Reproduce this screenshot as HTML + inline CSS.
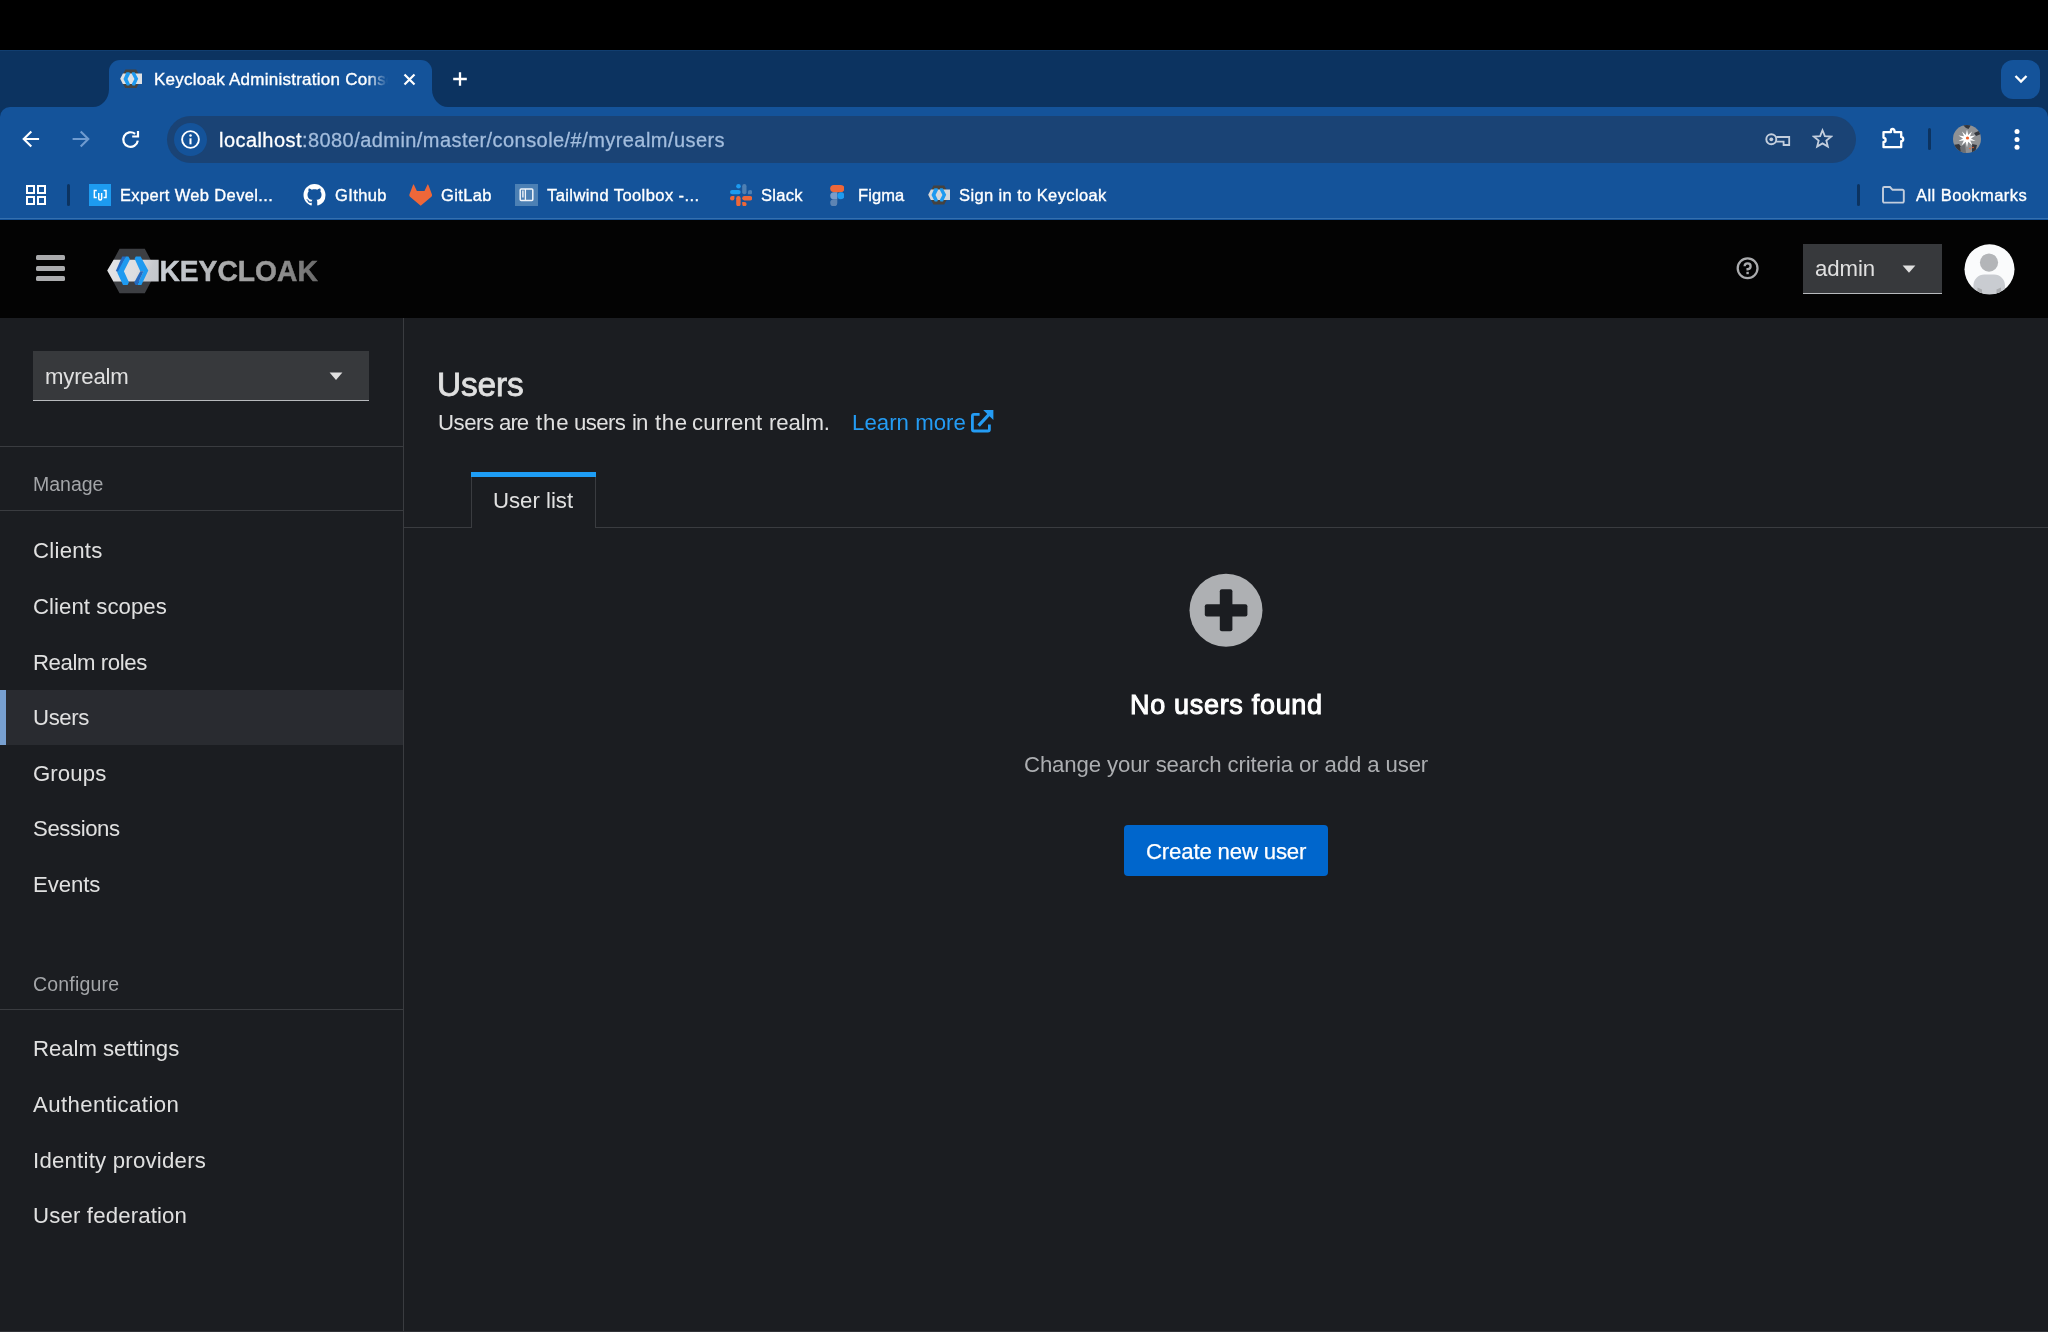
<!DOCTYPE html>
<html lang="en">
<head>
<meta charset="utf-8">
<title>Keycloak Administration Console</title>
<style>
*{box-sizing:border-box;margin:0;padding:0}
html,body{width:2048px;height:1332px;overflow:hidden;background:#1b1d21}
body{font-family:"Liberation Sans",sans-serif;color:#e0e0e0;position:relative}
.abs{position:absolute}
.t{position:absolute;white-space:pre;line-height:1;will-change:transform}
/* ---------- browser chrome ---------- */
#osbar{left:0;top:0;width:2048px;height:50px;background:#000}
#tabstrip{left:0;top:49.6px;width:2048px;height:80px;background:#0c3360;border-top:1px solid #113e70}
#toolbar{left:0;top:107px;width:2048px;height:112.5px;background:#14539a;border-radius:10px 10px 0 0}
#chromeline{left:0;top:218.4px;width:2048px;height:1.1px;background:#346fae}
#tab{left:108.7px;top:60px;width:323.5px;height:47px;background:#14539a;border-radius:11px 11px 0 0}
.tabcurve{width:16px;height:18px;top:89px;background:#14539a}
.tabcurve i{display:block;width:16px;height:18px;background:#0c3360}
#tcl{left:92.7px}#tcl i{border-radius:0 0 16px 0/0 0 18px 0}
#tcr{left:432.2px}#tcr i{border-radius:0 0 0 16px/0 0 0 18px}
#omni{left:167px;top:116px;width:1689px;height:47px;border-radius:24px;background:#1a4375}
#omniinfo{left:174.4px;top:122.5px;width:33px;height:33px;border-radius:50%;background:#14539a}
#tabsearch{left:2001px;top:60px;width:39px;height:39px;border-radius:12px;background:#14539a}
.chrometxt{color:#fff;font-size:16.5px;-webkit-text-stroke:.35px #fff}
/* ---------- keycloak ---------- */
#kchead{left:0;top:220px;width:2048px;height:98px;background:#030303}
#side{left:0;top:318px;width:403px;height:1014px;background:#1b1d21}
#sideborder{left:403px;top:318px;width:1px;height:1014px;background:#3a3c40}
.hr{height:1px;background:#3a3c40;left:0;width:403px}
.nav{left:33.1px;font-size:22.2px;color:#e0e0e0}
.navsec{left:33.3px;font-size:19.5px;color:#a3a5a8}
#navsel{left:0;top:690px;width:403px;height:55.4px;background:#292b30}
#navselbar{left:0;top:690px;width:5.5px;height:55.4px;background:#78a0d0}
#realm{left:33.4px;top:351px;width:335.6px;height:50px;background:#37393c;border-bottom:1px solid #b8babd}
#userdd{left:1803px;top:244px;width:139px;height:50px;background:#37393c;border-bottom:1px solid #b8babd}
#tabline{left:404px;top:527px;width:1644px;height:1px;background:#3a3c40}
#utab{left:471px;top:472px;width:125px;height:56px;background:#1b1d21;border-left:1px solid #3a3c40;border-right:1px solid #3a3c40}
#utabbar{left:471px;top:472px;width:125px;height:4.9px;background:#1e9df5}
#btn{left:1123.7px;top:825.4px;width:204.8px;height:50.4px;border-radius:4px;background:#0066cc}
</style>
</head>
<body>
<!-- browser chrome -->
<section id="browser-chrome">
<div class="abs" id="osbar"></div>
<div class="abs" id="tabstrip"></div>
<div class="abs" id="toolbar"></div>
<div class="abs" id="chromeline"></div>
<div class="abs" id="tab"></div>
<div class="abs tabcurve" id="tcl"><i></i></div>
<div class="abs tabcurve" id="tcr"><i></i></div>
<div class="abs" id="tabsearch"></div>
<div class="abs" id="omni"></div>
<div class="abs" id="omniinfo"></div>
<!-- tab -->
<svg class="abs" style="left:120px;top:68.7px" width="22.4" height="19.8" viewBox="106.8 248.4 52.4 45.2"><polygon points="119.5,248.8 144.8,248.8 156.6,271 144.8,293.2 119.5,293.2 107.7,271" fill="#45423f"/><polygon points="113.6,258.6 158.7,258.6 158.7,282.8 113.4,282.8 107.2,270.6" fill="#dfe1e4"/><polygon points="121.8,255.6 128.8,255.6 130.6,258.8 124.4,271 130,283 128.4,286.4 122.6,286.4 115,271" fill="#1e9af0"/><polygon points="135.2,255.6 141.2,255.6 149.4,270.6 142,286.4 136,286.4 134.4,283.2 140.6,271 134,258.6" fill="#1e9af0"/></svg>
<div class="t" id="tabtitle" style="left:154px;top:70.5px;font-size:17px;letter-spacing:.25px;color:#fff;-webkit-text-stroke:.35px #fff;width:234px;overflow:hidden;-webkit-mask-image:linear-gradient(90deg,#000 91%,transparent 100%);mask-image:linear-gradient(90deg,#000 91%,transparent 100%)">Keycloak Administration Console</div>
<svg class="abs" style="left:402px;top:72px" width="15" height="15" viewBox="0 0 15 15"><path d="M2.5 2.5 L12.5 12.5 M12.5 2.5 L2.5 12.5" stroke="#fff" stroke-width="2.2" fill="none"/></svg>
<svg class="abs" style="left:451px;top:70px" width="18" height="18" viewBox="0 0 18 18"><path d="M9 2.2 V15.8 M2.2 9 H15.8" stroke="#fff" stroke-width="2.3" fill="none"/></svg>
<svg class="abs" style="left:2012.5px;top:73px" width="16" height="12" viewBox="0 0 16 12"><path d="M2.5 3 L8 8.5 L13.5 3" stroke="#fff" stroke-width="2.4" fill="none"/></svg>
<!-- nav buttons -->
<svg class="abs" style="left:20px;top:128.4px" width="22" height="22" viewBox="0 0 22 22"><path d="M19.1 11 H3.8 M11.3 3.4 L3.7 11 L11.3 18.6" stroke="#fff" stroke-width="2.1" fill="none"/></svg>
<svg class="abs" style="left:70px;top:128.4px" width="22" height="22" viewBox="0 0 22 22"><path d="M2.6 11 H18.2 M10.7 3.4 L18.3 11 L10.7 18.6" stroke="#6f9bd0" stroke-width="2.1" fill="none"/></svg>
<svg class="abs" style="left:120px;top:128px" width="22" height="22" viewBox="0 0 22 22"><path d="M17.8 12.6 A7.3 7.3 0 1 1 15.1 5.85" stroke="#fff" stroke-width="2.2" fill="none"/><path d="M12.2 8.5 H18 V3.1" stroke="#fff" stroke-width="2.2" fill="none"/></svg>
<!-- info icon -->
<svg class="abs" style="left:180.4px;top:128.5px" width="21" height="21" viewBox="0 0 21 21"><circle cx="10.5" cy="10.5" r="8.4" stroke="#fff" stroke-width="1.9" fill="none"/><rect x="9.5" y="9.3" width="2" height="6" fill="#fff"/><circle cx="10.5" cy="6.5" r="1.25" fill="#fff"/></svg>
<div class="t" style="left:219px;top:129.5px;font-size:20px;letter-spacing:.44px;color:#a3bddd;-webkit-text-stroke:.3px"><span style="color:#fff">localhost</span>:8080/admin/master/console/#/myrealm/users</div>
<!-- key -->
<svg class="abs" style="left:1764px;top:130px" width="28" height="18" viewBox="0 0 28 18"><circle cx="7.3" cy="9.3" r="5" stroke="#c3cedd" stroke-width="1.9" fill="none"/><circle cx="7.3" cy="9.3" r="1.9" fill="#c3cedd"/><path d="M12.2 7 H25.2 V15 H19.6 V11.7 H12.2" stroke="#c3cedd" stroke-width="1.8" fill="none"/></svg>
<!-- star -->
<svg class="abs" style="left:1811.5px;top:128px" width="21" height="21" viewBox="0 0 24 24"><path d="M12 2.6 L14.7 9.2 L21.8 9.8 L16.4 14.4 L18.1 21.3 L12 17.6 L5.9 21.3 L7.6 14.4 L2.2 9.8 L9.3 9.2 Z" stroke="#c3cedd" stroke-width="2.1" fill="none" stroke-linejoin="miter"/></svg>
<!-- extensions -->
<svg class="abs" style="left:1880px;top:125px" width="27" height="26" viewBox="0 0 27 26"><path d="M3.5 7.2 H10.9 V5.8 A1.8 1.8 0 0 1 14.5 5.8 V7.2 H21.2 V12.2 A2 2 0 0 1 21.2 16.2 V22.2 H3.5 V17 A2.1 2.1 0 0 0 3.5 12.8 Z" stroke="#fff" stroke-width="2.3" fill="none" stroke-linejoin="round"/></svg>
<div class="abs" style="left:1928px;top:128px;width:3px;height:22px;border-radius:2px;background:#0c3360"></div>
<!-- profile -->
<svg class="abs" style="left:1953px;top:125px" width="28" height="28" viewBox="0 0 28 28"><defs><clipPath id="pc"><circle cx="14" cy="14" r="14"/></clipPath></defs><g clip-path="url(#pc)"><rect width="28" height="28" fill="#8f9194"/><path d="M10 0 L18 0 L15.5 4 L13 3 Z M0 20 L6 19 L9 23 L8 28 L0 28 Z M21 8 L28 5 L28 9 L23 11 Z M19 19 L24 20 L22 28 L19 28 Z" fill="#33363d"/><path d="M7 22 L12 19 L13 28 L8 28 Z" fill="#6d6f73"/><path d="M14 4.5 L15.2 10 L19 6.5 L17 11.2 L22.5 10.5 L18 13.4 L22.5 16 L17.2 15.6 L19.5 20.5 L15.2 16.8 L14 22.5 L12.8 16.8 L8.5 20.5 L10.8 15.6 L5.5 16 L10 13.4 L5.5 10.5 L11 11.2 L9 6.5 L12.8 10 Z" fill="#fff"/><circle cx="14.5" cy="13" r="1.6" fill="#f0602a"/><circle cx="17" cy="23.5" r=".8" fill="#f0602a"/><circle cx="20" cy="22.5" r=".8" fill="#f0602a"/></g></svg>
<svg class="abs" style="left:2012px;top:127px" width="10" height="24" viewBox="0 0 10 24"><circle cx="5" cy="4.6" r="2.5" fill="#fff"/><circle cx="5" cy="12.4" r="2.5" fill="#fff"/><circle cx="5" cy="20.2" r="2.5" fill="#fff"/></svg>
<!-- bookmarks bar -->
<svg class="abs" style="left:25px;top:184px" width="22" height="22" viewBox="0 0 22 22"><g stroke="#fff" stroke-width="2" fill="none"><rect x="2" y="2" width="7" height="7"/><rect x="13" y="2" width="7" height="7"/><rect x="2" y="13" width="7" height="7"/><rect x="13" y="13" width="7" height="7"/></g></svg>
<div class="abs" style="left:67px;top:184px;width:3px;height:22px;border-radius:2px;background:#0c3360"></div>
<svg class="abs" style="left:89px;top:184px" width="22.4" height="22" viewBox="0 0 23 22" preserveAspectRatio="none"><rect width="23" height="22" fill="#1d9bf0"/><g stroke="#fff" stroke-width="1.5" fill="none"><path d="M8 6.5 H5.5 V13.5 H8"/><path d="M15 6.5 H17.5 V13.5 H15"/><path d="M10 9 V14.5 A1.5 1.5 0 0 0 13 14.5 V9"/></g></svg>
<div class="t chrometxt" style="left:120px;top:186.5px;letter-spacing:.35px">Expert Web Devel...</div>
<svg class="abs" style="left:303px;top:184px" width="23" height="22" viewBox="0 0 16 16"><path fill="#fff" d="M8 0C3.58 0 0 3.58 0 8c0 3.54 2.29 6.53 5.47 7.59.4.07.55-.17.55-.38 0-.19-.01-.82-.01-1.49-2.01.37-2.53-.49-2.69-.94-.09-.23-.48-.94-.82-1.13-.28-.15-.68-.52-.01-.53.63-.01 1.08.58 1.23.82.72 1.21 1.87.87 2.33.66.07-.52.28-.87.51-1.07-1.78-.2-3.64-.89-3.64-3.95 0-.87.31-1.59.82-2.15-.08-.2-.36-1.02.08-2.12 0 0 .67-.21 2.2.82.64-.18 1.32-.27 2-.27s1.36.09 2 .27c1.53-1.04 2.2-.82 2.2-.82.44 1.1.16 1.92.08 2.12.51.56.82 1.27.82 2.15 0 3.07-1.87 3.75-3.65 3.95.29.25.54.73.54 1.48 0 1.07-.01 1.93-.01 2.2 0 .21.15.46.55.38A8.01 8.01 0 0 0 16 8c0-4.42-3.58-8-8-8z"/></svg>
<div class="t chrometxt" style="left:335px;top:186.5px;letter-spacing:.4px">GIthub</div>
<svg class="abs" style="left:409px;top:184px" width="23.4" height="22" viewBox="0 0 23.4 22"><path d="M4.7 0.2 L7.9 6.9 H15.5 L18.7 0.2 Q19.3 0.6 19.6 1.6 L23 10.6 Q23.3 11.8 22.4 12.8 L11.7 21.7 L1 12.8 Q0.1 11.8 0.4 10.6 L3.8 1.6 Q4.1 0.6 4.7 0.2 Z" fill="#ee6739"/></svg>
<div class="t chrometxt" style="left:441px;top:186.5px;letter-spacing:.38px">GitLab</div>
<svg class="abs" style="left:515px;top:184px" width="23" height="22" viewBox="0 0 23 22"><rect width="23" height="22" fill="#4c80b4"/><rect x="5.2" y="5" width="12.6" height="11.4" rx="1" fill="none" stroke="#f0f4f9" stroke-width="1.5"/><path d="M10.4 5 V16.4" stroke="#f0f4f9" stroke-width="1.3"/><path d="M7.9 6.6 V13.6" stroke="#f0f4f9" stroke-width="1.4"/></svg>
<div class="t chrometxt" style="left:547px;top:186.5px;letter-spacing:.42px">Tailwind Toolbox -...</div>
<svg class="abs" style="left:729.8px;top:183.9px" width="22.3" height="22.3" viewBox="0 0 22.3 22.3"><circle cx="8.5" cy="2.3" r="2.3" fill="#1d9bf0"/><rect x="0" y="5.9" width="10.7" height="4.4" rx="2.2" fill="#1d9bf0"/><rect x="12.2" y="0" width="4.3" height="10.3" rx="2.15" fill="#4f7fb2"/><path d="M17.9 10.3 V8.1 A2.2 2.2 0 0 1 22.3 8.1 A2.2 2.2 0 0 1 20.1 10.3 Z" fill="#4f7fb2"/><path d="M4.4 12.1 V14.3 A2.2 2.2 0 1 1 2.2 12.1 Z" fill="#ee6739"/><rect x="6.2" y="12.1" width="4.4" height="10.2" rx="2.2" fill="#ee6739"/><rect x="12.2" y="12.1" width="10.1" height="4.3" rx="2.15" fill="#ee6739"/><path d="M12.2 17.9 H14.4 A2.2 2.2 0 1 1 12.2 20.1 Z" fill="#ee6739"/></svg>
<div class="t chrometxt" style="left:761px;top:186.5px;letter-spacing:.29px">Slack</div>
<svg class="abs" style="left:829.8px;top:184.8px" width="14.6" height="21.4" viewBox="0 0 14.6 21.4"><rect x="0.2" y="0" width="14.2" height="7.2" rx="3.6" fill="#ee6739"/><path d="M3.8 7.2 H7.3 V14.3 H3.8 A3.55 3.55 0 0 1 3.8 7.2 Z" fill="#7a9cc9"/><circle cx="10.9" cy="10.7" r="3.55" fill="#1d9bf0"/><path d="M3.8 14.3 H7.3 V17.8 A3.55 3.55 0 1 1 3.8 14.3 Z" fill="#5d84b3"/></svg>
<div class="t chrometxt" style="left:857.5px;top:186.5px;letter-spacing:.07px">Figma</div>
<svg class="abs" style="left:927.6px;top:185px" width="22.4" height="19.8" viewBox="106.8 248.4 52.4 45.2"><polygon points="119.5,248.8 144.8,248.8 156.6,271 144.8,293.2 119.5,293.2 107.7,271" fill="#45423f"/><polygon points="113.6,258.6 158.7,258.6 158.7,282.8 113.4,282.8 107.2,270.6" fill="#d5d8dc"/><polygon points="121.8,255.6 128.8,255.6 130.6,258.8 124.4,271 130,283 128.4,286.4 122.6,286.4 115,271" fill="#1e9af0"/><polygon points="135.2,255.6 141.2,255.6 149.4,270.6 142,286.4 136,286.4 134.4,283.2 140.6,271 134,258.6" fill="#1e9af0"/></svg>
<div class="t chrometxt" style="left:959px;top:186.5px;letter-spacing:.39px">Sign in to Keycloak</div>
<div class="abs" style="left:1857px;top:184px;width:3px;height:22px;border-radius:2px;background:#0c3360"></div>
<svg class="abs" style="left:1881px;top:185px" width="25" height="20" viewBox="0 0 25 20"><path d="M2 3.2 A1.2 1.2 0 0 1 3.2 2 H9 L11.5 4.8 H21.5 A1.3 1.3 0 0 1 22.8 6.1 V16.3 A1.3 1.3 0 0 1 21.5 17.6 H3.3 A1.3 1.3 0 0 1 2 16.3 Z" stroke="#c3cedd" stroke-width="1.9" fill="none"/></svg>
<div class="t chrometxt" style="left:1916px;top:186.5px;letter-spacing:.44px">All Bookmarks</div>

</section>
<!-- keycloak header -->
<header id="masthead">
<div class="abs" id="kchead"></div>
<!-- hamburger -->
<div class="abs" style="left:35.6px;top:255.1px;width:29.4px;height:5px;border-radius:1.5px;background:#aaabad"></div>
<div class="abs" style="left:35.6px;top:265.6px;width:29.4px;height:5px;border-radius:1.5px;background:#aaabad"></div>
<div class="abs" style="left:35.6px;top:276px;width:29.4px;height:5px;border-radius:1.5px;background:#aaabad"></div>
<!-- logo -->
<svg class="abs" style="left:104px;top:244px;will-change:transform" width="220" height="54" viewBox="104 244 220 54">
<defs><linearGradient id="lg1" gradientUnits="userSpaceOnUse" x1="160" x2="318" y1="0" y2="0"><stop offset="0" stop-color="#c8ced5"/><stop offset=".25" stop-color="#bbbec2"/><stop offset=".45" stop-color="#a7a7a7"/><stop offset=".72" stop-color="#959595"/><stop offset="1" stop-color="#6a6a6a"/></linearGradient>
<linearGradient id="lg2" gradientUnits="userSpaceOnUse" x1="107" x2="159" y1="262" y2="282"><stop offset="0" stop-color="#e3e4e6"/><stop offset=".55" stop-color="#dcdde0"/><stop offset=".8" stop-color="#c6c9ce"/><stop offset="1" stop-color="#c2c6cb"/></linearGradient></defs>
<polygon points="119.5,248.8 144.8,248.8 156.6,271 144.8,293.2 119.5,293.2 107.7,271" fill="#3d3f43"/>
<polygon points="113.6,259.7 158.7,259.7 158.7,281.6 113.4,281.6 107.2,270.6" fill="url(#lg2)"/>
<polygon points="122.2,256.5 125.9,256.5 119,272.6 115.8,271" fill="#2569be"/>
<polygon points="125.9,256.5 128.4,256.5 130,259.3 123.9,271.2 128.9,282.3 127.6,284.9 123,284.9 117.2,272.6 118.4,270.6" fill="#1e9af0"/>
<polygon points="135.8,256.5 140.6,256.5 148.3,270.6 141.4,284.9 137.3,284.9 143.5,271.3 140.3,271.3 134.6,258.8" fill="#1e9af0"/>
<polygon points="140.3,271.3 143.5,271.3 137.3,284.9 135.6,284.9 134.2,282.6" fill="#2569be"/>
<text x="159.4" y="281" font-family="Liberation Sans, sans-serif" font-weight="700" font-size="30.2" textLength="158.4" lengthAdjust="spacingAndGlyphs" fill="url(#lg1)" stroke="url(#lg1)" stroke-width=".5">KEYCLOAK</text>
</svg>
<!-- help -->
<svg class="abs" style="left:1735px;top:256px" width="25" height="25" viewBox="0 0 25 25"><circle cx="12.6" cy="12.2" r="9.9" stroke="#aaabad" stroke-width="2.3" fill="none"/><path d="M9.6 10.2 A3 2.9 0 1 1 12.6 13.2 V14.6" stroke="#aaabad" stroke-width="2.3" fill="none"/><rect x="11.4" y="15.8" width="2.4" height="2.4" fill="#aaabad"/></svg>
<!-- user dropdown -->
<div class="abs" id="userdd"></div>
<div class="t" style="left:1814.5px;top:258px;font-size:22.2px;letter-spacing:-.09px;color:#e0e0e0">admin</div>
<svg class="abs" style="left:1901px;top:264px" width="16" height="10" viewBox="0 0 16 10"><path d="M1.6 1.4 H14.4 L8 8.8 Z" fill="#e0e0e0"/></svg>
<!-- avatar -->
<svg class="abs" style="left:1964px;top:243.5px" width="51" height="51" viewBox="0 0 51 51"><defs><clipPath id="ac"><circle cx="25.5" cy="25.3" r="25"/></clipPath></defs><circle cx="25.5" cy="25.3" r="25" fill="#fafbfc"/><g clip-path="url(#ac)"><circle cx="25" cy="18.6" r="9.1" fill="#b3b5b8"/><path d="M9.4 52 V41.5 A11 11 0 0 1 20.4 30.5 H30 A11 11 0 0 1 41 41.5 V52 Z" fill="#c9ccd1"/><path d="M13.5 52 V43.5 L18 45.5 V52 Z M37 52 V43.5 L32.5 45.5 V52 Z" fill="#a9abae"/></g></svg>

</header>
<!-- sidebar -->
<nav id="sidebar">
<div class="abs" id="side"></div>
<div class="abs" id="sideborder"></div>
<div class="abs" id="realm"></div>
<div class="t" style="left:44.5px;top:366px;font-size:22.2px;letter-spacing:-.22px;color:#e0e0e0">myrealm</div>
<svg class="abs" style="left:328px;top:371px" width="16" height="10" viewBox="0 0 16 10"><path d="M1.6 1.6 H14.4 L8 9 Z" fill="#e0e0e0"/></svg>
<div class="abs hr" style="top:446px"></div>
<div class="t navsec" style="top:475.2px">Manage</div>
<div class="abs hr" style="top:510px"></div>
<div class="abs" id="navsel"></div><div class="abs" id="navselbar"></div>
<div class="t nav" style="top:540.4px;letter-spacing:.25px">Clients</div>
<div class="t nav" style="top:596px;letter-spacing:.05px">Client scopes</div>
<div class="t nav" style="top:651.6px;letter-spacing:-.41px">Realm roles</div>
<div class="t nav" style="top:707.2px;letter-spacing:-.38px">Users</div>
<div class="t nav" style="top:762.8px;letter-spacing:.1px">Groups</div>
<div class="t nav" style="top:818.4px;letter-spacing:-.42px">Sessions</div>
<div class="t nav" style="top:874px;letter-spacing:-.11px">Events</div>
<div class="t navsec" style="top:974.5px;letter-spacing:.2px">Configure</div>
<div class="abs hr" style="top:1009px"></div>
<div class="t nav" style="top:1038.4px;letter-spacing:-.04px">Realm settings</div>
<div class="t nav" style="top:1094px;letter-spacing:.4px">Authentication</div>
<div class="t nav" style="top:1149.8px;letter-spacing:.23px">Identity providers</div>
<div class="t nav" style="top:1205.3px;letter-spacing:.16px">User federation</div>
<div class="abs" style="left:0;top:1331px;width:2048px;height:1px;background:#313337"></div>

</nav>
<!-- main -->
<main id="content">
<div class="t" style="left:437px;top:368.1px;font-size:33.4px;color:#e0e0e0;-webkit-text-stroke:.8px #e0e0e0;letter-spacing:-.1px">Users</div>
<div class="abs" style="left:437.5px;top:412.3px;font-size:22.2px;letter-spacing:-.13px;color:#e0e0e0"><span class="t" style="left:0.0px;top:0;letter-spacing:-0.48px">Users</span><span class="t" style="left:61.3px;top:0;letter-spacing:-0.93px">are</span><span class="t" style="left:98.5px;top:0;letter-spacing:0.87px">the</span><span class="t" style="left:136.0px;top:0;letter-spacing:-0.63px">users</span><span class="t" style="left:194.1px;top:0;letter-spacing:-0.93px">in</span><span class="t" style="left:217.5px;top:0;letter-spacing:0.67px">the</span><span class="t" style="left:254.8px;top:0;letter-spacing:0.20px">current</span><span class="t" style="left:331.0px;top:0;letter-spacing:-0.13px">realm.</span></div>
<div class="t" style="left:851.9px;top:412.3px;font-size:22.2px;letter-spacing:.04px;color:#249cf4">Learn more</div>
<svg class="abs" style="left:969px;top:408px" width="27" height="27" viewBox="969 408 27 27"><path d="M989.4 424.6 V429.4 A1.6 1.6 0 0 1 987.8 431 H974 A1.6 1.6 0 0 1 972.4 429.4 V416 A1.6 1.6 0 0 1 974 414.4 H979.6" stroke="#249cf4" stroke-width="2.8" fill="none"/><path d="M978.6 425.6 L989.4 414" stroke="#249cf4" stroke-width="3.3" fill="none"/><path d="M983.2 410 H993.4 V420 Z" fill="#249cf4"/></svg>
<div class="abs" id="tabline"></div>
<div class="abs" id="utab"></div><div class="abs" id="utabbar"></div>
<div class="t" style="left:493px;top:489.7px;font-size:22.2px;color:#e0e0e0">User list</div>
<!-- empty state -->
<svg class="abs" style="left:1189px;top:573px" width="75" height="75" viewBox="0 0 75 75"><circle cx="37" cy="37.3" r="36.5" fill="#aeb0b3"/><rect x="15.8" y="31.3" width="42.6" height="12.2" rx="2" fill="#1b1d21"/><rect x="30.8" y="16.2" width="12.6" height="42" rx="2" fill="#1b1d21"/></svg>
<div class="t" style="left:1130.2px;top:692.3px;font-size:27px;font-weight:400;color:#fff;letter-spacing:.69px;-webkit-text-stroke:1px #fff">No users found</div>
<div class="t" style="left:1024px;top:753.9px;font-size:22.2px;letter-spacing:-.13px;color:#acaeb1">Change your search criteria or add a user</div>
<div class="abs" id="btn"></div>
<div class="t" style="left:1145.6px;top:840.5px;font-size:22.2px;letter-spacing:-.17px;color:#fff;-webkit-text-stroke:.25px #fff">Create new user</div>

</main>
</body>
</html>
